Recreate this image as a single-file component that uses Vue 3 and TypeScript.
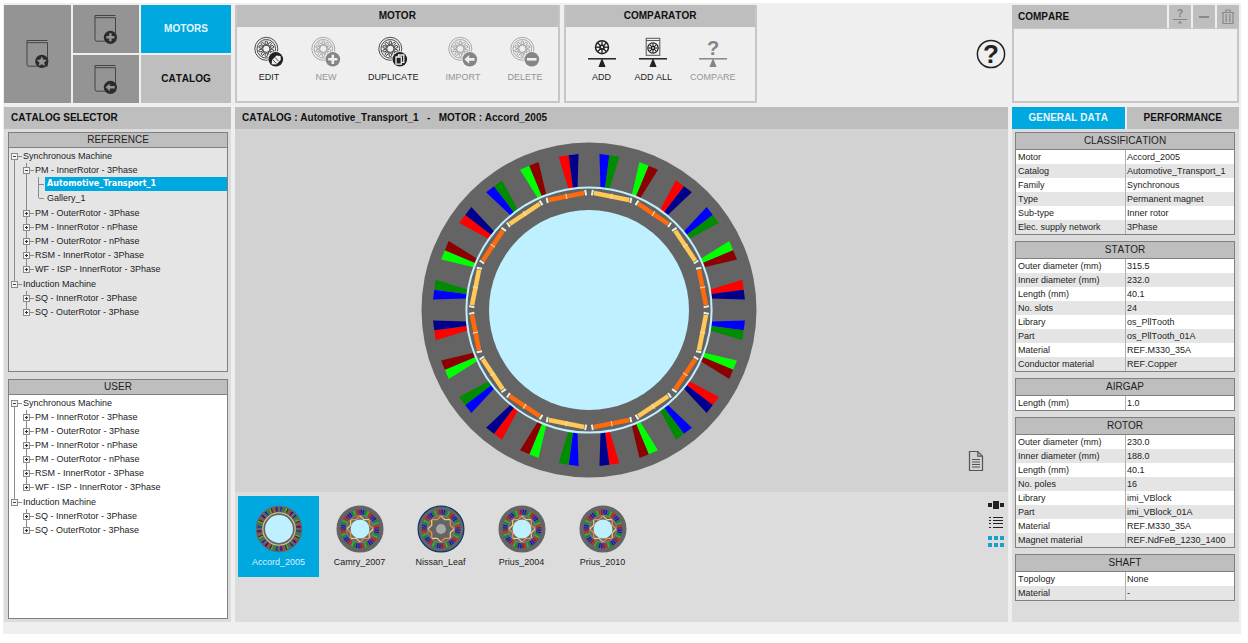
<script setup lang="ts">
import { ref } from 'vue'

type Row = [string, string]
interface Leaf { label: string; open?: boolean; children?: string[] }
interface Branch { label: string; children: Leaf[] }
interface Shape { points: string; fill: string }
interface Motor { name: string; kind: 'thin' | 'hybrid' | 'leaf' }

const pmKinds: Leaf[] = [
  { label: 'PM - OuterRotor - 3Phase' },
  { label: 'PM - InnerRotor - nPhase' },
  { label: 'PM - OuterRotor - nPhase' },
  { label: 'RSM - InnerRotor - 3Phase' },
  { label: 'WF - ISP - InnerRotor - 3Phase' },
]
const induction: Branch = {
  label: 'Induction Machine',
  children: [{ label: 'SQ - InnerRotor - 3Phase' }, { label: 'SQ - OuterRotor - 3Phase' }],
}
const catalogs: { title: string; kind: string; tree: Branch[] }[] = [
  {
    title: 'REFERENCE',
    kind: 'reference',
    tree: [
      {
        label: 'Synchronous Machine',
        children: [
          { label: 'PM - InnerRotor - 3Phase', open: true, children: ['Automotive_Transport_1', 'Gallery_1'] },
          ...pmKinds,
        ],
      },
      induction,
    ],
  },
  {
    title: 'USER',
    kind: 'user',
    tree: [
      { label: 'Synchronous Machine', children: [{ label: 'PM - InnerRotor - 3Phase' }, ...pmKinds] },
      induction,
    ],
  },
]
const catalog = ref('Automotive_Transport_1')

const sections: { title: string; rows: Row[] }[] = [
  {
    title: 'CLASSIFICATION',
    rows: [
      ['Motor', 'Accord_2005'],
      ['Catalog', 'Automotive_Transport_1'],
      ['Family', 'Synchronous'],
      ['Type', 'Permanent magnet'],
      ['Sub-type', 'Inner rotor'],
      ['Elec. supply network', '3Phase'],
    ],
  },
  {
    title: 'STATOR',
    rows: [
      ['Outer diameter (mm)', '315.5'],
      ['Inner diameter (mm)', '232.0'],
      ['Length (mm)', '40.1'],
      ['No. slots', '24'],
      ['Library', 'os_PllTooth'],
      ['Part', 'os_PllTooth_01A'],
      ['Material', 'REF.M330_35A'],
      ['Conductor material', 'REF.Copper'],
    ],
  },
  { title: 'AIRGAP', rows: [['Length (mm)', '1.0']] },
  {
    title: 'ROTOR',
    rows: [
      ['Outer diameter (mm)', '230.0'],
      ['Inner diameter (mm)', '188.0'],
      ['Length (mm)', '40.1'],
      ['No. poles', '16'],
      ['Library', 'imi_VBlock'],
      ['Part', 'imi_VBlock_01A'],
      ['Material', 'REF.M330_35A'],
      ['Magnet material', 'REF.NdFeB_1230_1400'],
    ],
  },
  { title: 'SHAFT', rows: [['Topology', 'None'], ['Material', '-']] },
]

const motorTools = [
  { label: 'EDIT', badge: 'edit', disabled: false },
  { label: 'NEW', badge: 'plus', disabled: true },
  { label: 'DUPLICATE', badge: 'copy', disabled: false },
  { label: 'IMPORT', badge: 'arrow', disabled: true },
  { label: 'DELETE', badge: 'minus', disabled: true },
]
const compareTools = [
  { label: 'ADD', icon: 'wheel', disabled: false },
  { label: 'ADD ALL', icon: 'book', disabled: false },
  { label: 'COMPARE', icon: 'question', disabled: true },
]
const teeth = Array.from({ length: 10 }, (_, i) => i * 36)
const spokes = Array.from({ length: 8 }, (_, i) => i * 45)

const motors: Motor[] = [
  { name: 'Accord_2005', kind: 'thin' },
  { name: 'Camry_2007', kind: 'hybrid' },
  { name: 'Nissan_Leaf', kind: 'leaf' },
  { name: 'Prius_2004', kind: 'hybrid' },
  { name: 'Prius_2010', kind: 'hybrid' },
]
const motor = ref('Accord_2005')

// Winding colours, clockwise, as [leading side, trailing side] of each slot.
const phases = [
  ['#0000ff', '#008c00'],
  ['#00ff00', '#8c0000'],
  ['#ff0000', '#00008c'],
]

function place(angle: number, points: number[][]): string {
  const a = (angle * Math.PI) / 180
  const c = Math.cos(a)
  const s = Math.sin(a)
  return points.map(([x, y]) => `${(x * c - y * s).toFixed(2)},${(x * s + y * c).toFixed(2)}`).join(' ')
}

const slots: Shape[] = Array.from({ length: 24 }).flatMap((_, i) => {
  const angle = 7.5 + i * 15
  return [
    { points: place(angle, [[-10, -156], [0, -156], [0, -123], [-4.6, -123]]), fill: phases[i % 3][0] },
    { points: place(angle, [[0, -156], [10, -156], [4.6, -123], [0, -123]]), fill: phases[i % 3][1] },
  ]
})
const magnets = Array.from({ length: 16 }, (_, i) => ({
  angle: 11.25 + i * 22.5,
  fill: i % 2 ? '#ff6a0d' : '#ffc857',
}))

const denseColors = ['#1414e0', '#1414b4', '#0c8c1c', '#10c828', '#e01c1c', '#a01414']
const denseSlots: Shape[] = Array.from({ length: 48 }, (_, i) => ({
  points: place(3.75 + i * 7.5, [[-6, -138], [6, -138], [4, -102], [-4, -102]]),
  fill: denseColors[i % 6],
}))
const poles = Array.from({ length: 8 }, (_, i) => ({ angle: 22.5 + i * 45, fill: i % 2 ? '#ff8a3c' : '#f0d070' }))
</script>

<template>
  <div class="page">
    <nav class="modes">
      <button class="mode tall" aria-label="Favourite catalogs">
        <svg width="24" height="30" viewBox="0 0 24 30">
          <path class="book" d="M1 1.5H21.5M1 3.7H21.5M1 1.5V25.5Q1 27.2 3 27.2H21.5V3.7" />
          <circle cx="15.8" cy="22.3" r="6.6" fill="#2b2b2b" />
          <path fill="#949494" d="M15.8 17.4l1.5 3.2 3.5.4-2.6 2.4.7 3.5-3.1-1.7-3.1 1.7.7-3.5-2.6-2.4 3.5-.4z" />
        </svg>
      </button>
      <button class="mode" aria-label="New catalog">
        <svg width="24" height="30" viewBox="0 0 24 30">
          <path class="book" d="M1 1.5H21.5M1 3.7H21.5M1 1.5V25.5Q1 27.2 3 27.2H21.5V3.7" />
          <circle cx="16.4" cy="23.3" r="6.6" fill="#2b2b2b" />
          <path d="M16.4 19.3v8M12.4 23.3h8" stroke="#949494" stroke-width="2.4" />
        </svg>
      </button>
      <button class="tab active">MOTORS</button>
      <button class="mode" aria-label="Import catalog">
        <svg width="24" height="30" viewBox="0 0 24 30">
          <path class="book" d="M1 1.5H21.5M1 3.7H21.5M1 1.5V25.5Q1 27.2 3 27.2H21.5V3.7" />
          <circle cx="16.4" cy="23.3" r="6.6" fill="#2b2b2b" />
          <path fill="#949494" d="M11.6 23.3l4.2-3.9v2.6h5v2.6h-5v2.6z" />
        </svg>
      </button>
      <button class="tab">CATALOG</button>
    </nav>

    <header class="toolbar">
      <section class="group">
        <h2>MOTOR</h2>
        <div class="tools">
          <button v-for="t in motorTools" :key="t.label" class="tool" :disabled="t.disabled">
            <svg width="30" height="32" viewBox="0 0 30 32">
              <g fill="none" stroke="currentColor" stroke-width="0.8">
                <circle cx="12.3" cy="12.8" r="11.5" />
                <circle cx="12.3" cy="12.8" r="9.3" />
                <circle cx="12.3" cy="12.8" r="3.6" />
                <rect v-for="a in teeth" :key="a" x="11.2" y="5.2" width="2.2" height="3.4" rx="0.6" :transform="`rotate(${a} 12.3 12.8)`" />
              </g>
              <circle cx="21.8" cy="23.3" r="8.1" fill="#efefef" />
              <circle cx="21.8" cy="23.3" r="7.3" :fill="t.disabled ? '#858585' : '#222'" />
              <g v-if="t.badge === 'edit'">
                <path d="M18 24l4.5-4.6 4 .6.4 3.8-4.6 4.6-4.6-.2z" fill="#efefef" />
                <path d="M18.6 23.6l3.7 3.9M21 21.4l3.4 3.6" stroke="#222" stroke-width="0.8" />
              </g>
              <path v-else-if="t.badge === 'plus'" d="M21.8 18.7v9.2M17.2 23.3h9.2" stroke="#efefef" stroke-width="2.6" />
              <g v-else-if="t.badge === 'copy'" stroke="#efefef" stroke-width="1.3">
                <path d="M20.5 19h5.3v7.4h-5.3z" fill="#222" />
                <path d="M18 21h5.3v7.2h-5.3z" fill="#222" />
              </g>
              <path v-else-if="t.badge === 'arrow'" d="M16.4 23.3l4.8-4.4v3h5.4v2.8h-5.4v3z" fill="#efefef" />
              <path v-else d="M17 23.3h9.6" stroke="#efefef" stroke-width="2.6" />
            </svg>
            <span>{{ t.label }}</span>
          </button>
        </div>
      </section>

      <section class="group compare-group">
        <h2>COMPARATOR</h2>
        <div class="tools">
          <button v-for="t in compareTools" :key="t.label" class="tool" :disabled="t.disabled">
            <svg width="30" height="32" viewBox="0 0 30 32">
              <rect v-if="t.icon === 'book'" x="8.2" y="2.3" width="13.6" height="17" fill="none" stroke="#555" stroke-width="1" />
              <path v-if="t.icon === 'book'" d="M8 4.5h14" stroke="#555" />
              <g v-if="t.icon !== 'question'" :transform="t.icon === 'book' ? 'translate(15 12) scale(0.8)' : 'translate(15 11.2)'">
                <circle r="6.5" fill="none" stroke="#222" stroke-width="1.5" />
                <path v-for="a in spokes" :key="a" d="M0 -6V0" stroke="#222" stroke-width="1.3" :transform="`rotate(${a})`" />
                <circle r="2.8" fill="#222" />
                <circle r="1.1" fill="#efefef" />
              </g>
              <text v-else x="15" y="19" class="mark" font-size="20">?</text>
              <path d="M1 22.8h28" :stroke="t.disabled ? '#858585' : '#222'" stroke-width="1.5" />
              <path d="M15 22l3.6 9h-7.2z" :fill="t.disabled ? '#858585' : '#222'" />
            </svg>
            <span>{{ t.label }}</span>
          </button>
        </div>
      </section>

      <button class="help" aria-label="Help">
        <svg width="30" height="30" viewBox="0 0 30 30">
          <circle cx="15" cy="15" r="13.6" fill="none" stroke="#222" stroke-width="1.5" />
          <text x="15" y="24" class="mark" font-size="26">?</text>
        </svg>
      </button>
    </header>

    <section class="compare">
      <div class="compare-head">
        <h2>COMPARE</h2>
        <button aria-label="Compare motors">
          <svg width="16" height="18" viewBox="0 0 16 18">
            <text x="8" y="9" class="mark" font-size="10">?</text>
            <path d="M1 11.5h14" stroke="#888" />
            <path d="M8 12.4l2 3.2h-4z" fill="#888" />
          </svg>
        </button>
        <button aria-label="Remove motor">
          <svg width="14" height="18" viewBox="0 0 14 18"><path d="M2 9h10" stroke="#888" stroke-width="2" /></svg>
        </button>
        <button aria-label="Clear comparison">
          <svg width="14" height="18" viewBox="0 0 14 18">
            <path d="M2 4.5h10v11h-10zM1 4.5h12M5 4V2h4v2M5.2 6v8M8.8 6v8" fill="none" stroke="#888" stroke-width="1.2" />
          </svg>
        </button>
      </div>
      <div class="compare-body"></div>
    </section>

    <aside class="selector">
      <h1 class="bar">CATALOG SELECTOR</h1>
      <div class="boxes">
        <section v-for="box in catalogs" :key="box.title" class="box" :class="box.kind">
          <h3>{{ box.title }}</h3>
          <ul class="tree">
            <li v-for="branch in box.tree" :key="branch.label">
              <div class="node">
                <button class="toggle" :aria-label="`Collapse ${branch.label}`"></button>
                <span>{{ branch.label }}</span>
              </div>
              <ul>
                <li v-for="leaf in branch.children" :key="leaf.label">
                  <div class="node">
                    <button class="toggle" :class="{ closed: !leaf.open }" :aria-label="`Toggle ${leaf.label}`"></button>
                    <span>{{ leaf.label }}</span>
                  </div>
                  <ul v-if="leaf.open" class="files">
                    <li v-for="name in leaf.children" :key="name">
                      <button class="file" :class="{ selected: catalog === name }" @click="catalog = name">{{ name }}</button>
                    </li>
                  </ul>
                </li>
              </ul>
            </li>
          </ul>
        </section>
      </div>
    </aside>

    <main class="viewer">
      <h1 class="bar">CATALOG : Automotive_Transport_1 &nbsp;&nbsp;-&nbsp;&nbsp; MOTOR : Accord_2005</h1>
      <div class="stage">
        <svg class="section-view" viewBox="-168 -168 336 336" role="img" aria-label="Motor cross-section">
          <circle r="167.5" fill="#646464" />
          <polygon v-for="(s, i) in slots" :key="i" :points="s.points" :fill="s.fill" />
          <circle r="122.6" fill="#646464" stroke="#c0f0ff" stroke-width="2" />
          <g v-for="m in magnets" :key="m.angle" :transform="`rotate(${m.angle})`">
            <rect x="-18" y="-118" width="36" height="4.6" :fill="m.fill" />
            <path d="M-19.6 -118.4v5.4M19.6 -118.4v5.4" stroke="#e8f4e4" stroke-width="2" />
            <path d="M0 -118.6v5.4" stroke="#e8e4c8" stroke-width="1" />
          </g>
          <circle r="100" fill="#bff0ff" />
        </svg>
        <div class="notes">
          <button aria-label="Motor notes">
            <svg width="16" height="22" viewBox="0 0 16 22">
              <path d="M1.5 1.5h8.3l4.7 4.7v14.3h-13zM9.8 1.5v4.7h4.7" fill="none" stroke="#555" stroke-width="1.2" />
              <path d="M4 9.5h8M4 12h8M4 14.5h8M4 17h8" stroke="#555" />
            </svg>
          </button>
        </div>
      </div>
      <div class="strip">
        <div class="thumbs">
          <button v-for="m in motors" :key="m.name" class="thumb" :class="{ selected: motor === m.name }" @click="motor = m.name">
            <svg width="48" height="48" viewBox="-172 -172 344 344">
              <template v-if="m.kind === 'thin'">
                <circle r="167" fill="#646464" />
                <polygon v-for="(s, i) in slots" :key="i" :points="s.points" :fill="s.fill" />
                <circle r="116" fill="#646464" stroke="#d8c890" stroke-width="8" />
                <circle r="100" fill="#bff0ff" />
              </template>
              <template v-else>
                <circle r="164" fill="#646464" :stroke="m.kind === 'leaf' ? '#10386c' : '#646464'" stroke-width="9" />
                <polygon v-for="(s, i) in denseSlots" :key="i" :points="s.points" :fill="s.fill" />
                <circle r="98" fill="#646464" stroke="#8fa09a" stroke-width="4" />
                <g v-for="p in poles" :key="p.angle" :transform="`rotate(${p.angle})`">
                  <path d="M-34 -86L0 -72L34 -86" fill="none" :stroke="p.fill" stroke-width="9" />
                </g>
                <circle v-if="m.kind === 'leaf'" r="36" fill="#a8a8a8" />
                <circle v-else r="68" fill="#bff0ff" />
              </template>
            </svg>
            <span>{{ m.name }}</span>
          </button>
        </div>
        <div class="views">
          <button aria-label="Carousel view">
            <svg width="18" height="10" viewBox="0 0 18 10"><path d="M1 3h4v4h-4zM6 1h6v8h-6zM13 3h4v4h-4z" fill="#222" /></svg>
          </button>
          <button aria-label="List view">
            <svg width="18" height="13" viewBox="0 0 18 13"><path d="M2 1.5h2M6 1.5h10M2 4.5h2M6 4.5h10M2 7.5h2M6 7.5h10M2 11.5h2M6 11.5h10" stroke="#222" /></svg>
          </button>
          <button aria-label="Grid view">
            <svg width="18" height="13" viewBox="0 0 18 13"><path d="M1 1h4v4h-4zM7 1h4v4h-4zM13 1h4v4h-4zM1 8h4v4h-4zM7 8h4v4h-4zM13 8h4v4h-4z" fill="#1a9fd0" /></svg>
          </button>
        </div>
      </div>
    </main>

    <aside class="details">
      <div class="tabs">
        <button class="tab active">GENERAL DATA</button>
        <button class="tab">PERFORMANCE</button>
      </div>
      <div class="sheets">
        <table v-for="s in sections" :key="s.title">
          <thead>
            <tr><th colspan="2">{{ s.title }}</th></tr>
          </thead>
          <tbody>
            <tr v-for="r in s.rows" :key="r[0]">
              <th scope="row">{{ r[0] }}</th>
              <td>{{ r[1] }}</td>
            </tr>
          </tbody>
        </table>
      </div>
    </aside>
  </div>
</template>

<style>
body {
  margin: 0;
  background: #fff;
}
</style>

<style scoped>
.page {
  box-sizing: border-box;
  height: calc(100vh - 12px);
  min-height: 620px;
  margin: 3px 7px 9px 3px;
  padding: 2px 2px 12px 1px;
  display: grid;
  grid-template-columns: 227px minmax(0, 1fr) 227px;
  grid-template-rows: 98px minmax(0, 1fr);
  gap: 4px;
  background: #efefef;
  font: 9px/14px "Liberation Sans", Arial, sans-serif;
  font-kerning: none;
  color: #222;
}
button {
  margin: 0;
  padding: 0;
  border: 0;
  background: none;
  font: inherit;
  color: inherit;
  cursor: pointer;
}
svg {
  display: block;
}
h1, h2, h3, ul {
  margin: 0;
  padding: 0;
}
h1, h2, .tab {
  font-size: 10px;
  font-weight: bold;
  color: #111;
}
ul {
  list-style: none;
}
.modes {
  display: grid;
  grid-template-columns: 67px 66px 1fr;
  grid-template-rows: 1fr 1fr;
  gap: 2px;
}
.mode {
  display: grid;
  place-items: center;
  background: #949494;
}
.tall {
  grid-row: span 2;
}
.book {
  fill: none;
  stroke: #444;
  stroke-width: 1;
}
.tab {
  background: #bebebe;
}
.tab.active {
  background: #00a8e0;
  color: #e4f6fc;
}
.toolbar {
  display: flex;
  gap: 4px;
}
.group {
  box-sizing: border-box;
  border: 2px solid #c6c6c6;
  border-top: 0;
}
.group h2 {
  background: #bebebe;
  line-height: 22px;
  text-align: center;
}
.tools {
  display: flex;
  gap: 27px;
  padding: 9px 15px 0 17px;
}
.compare-group .tools {
  gap: 18px;
  padding: 9px 19px 0 21px;
}
.tool {
  min-width: 30px;
  display: flex;
  flex-direction: column;
  align-items: center;
  gap: 2px;
}
.tool span {
  line-height: 14px;
}
.tool:disabled {
  color: #959595;
  cursor: default;
}
.mark {
  fill: #222;
  font-family: "Liberation Sans", Arial, sans-serif;
  font-weight: bold;
  text-anchor: middle;
}
.tool:disabled .mark, .compare .mark {
  fill: #858585;
}
.help {
  align-self: center;
  margin-left: auto;
  margin-right: 2px;
}
.compare {
  display: flex;
  flex-direction: column;
}
.compare-head {
  display: flex;
  gap: 2px;
  height: 23px;
}
.compare-head h2 {
  flex: 1;
  padding-left: 6px;
  background: #bebebe;
  line-height: 23px;
}
.compare-head button {
  width: 22px;
  display: grid;
  place-items: center;
  background: #bebebe;
}
.compare-body {
  flex: 1;
  border: 2px solid #c6c6c6;
  border-top-width: 1px;
}
.bar {
  height: 22px;
  padding-left: 7px;
  background: #bebebe;
  line-height: 22px;
  white-space: nowrap;
  overflow: hidden;
}
.selector, .viewer, .details {
  min-height: 0;
  display: flex;
  flex-direction: column;
  background: #dcdcdc;
}
.boxes {
  flex: 1;
  display: flex;
  flex-direction: column;
  gap: 7px;
  padding: 3px 3px 3px 4px;
}
.box {
  flex: 1;
  border: 1px solid #808080;
  background: #e5e5e5;
}
.box.user {
  background: #fff;
}
.box h3 {
  border-bottom: 1px solid #808080;
  background: #bebebe;
  font-size: 10px;
  font-weight: normal;
  line-height: 14px;
  text-align: center;
}
.tree {
  padding: 1px 0 0 2px;
}
.tree ul {
  padding: 0 0 1px 12px;
}
.tree li {
  position: relative;
}
.node {
  display: flex;
  align-items: center;
  height: 14px;
  white-space: nowrap;
}
.toggle {
  position: relative;
  box-sizing: border-box;
  width: 7px;
  height: 7px;
  margin-right: 5px;
  border: 1px solid #8a8a8a;
  background: linear-gradient(#444, #444) center / 3px 1px no-repeat, #f4f4f4;
  z-index: 1;
}
.toggle.closed {
  background: linear-gradient(#333, #333) center / 3px 1px no-repeat, linear-gradient(#333, #333) center / 1px 3px no-repeat, #f4f4f4;
}
.toggle::after {
  content: "";
  position: absolute;
  left: 6px;
  top: 2px;
  width: 4px;
  height: 1px;
  background: #8a8a8a;
}
.tree li::before {
  content: "";
  position: absolute;
  left: 3px;
  top: 0;
  bottom: 0;
  width: 1px;
  background: #8a8a8a;
}
.tree > li:first-child::before {
  top: 7px;
}
.tree li:last-child::before {
  bottom: auto;
  height: 7px;
}
.files li::after {
  content: "";
  position: absolute;
  left: 4px;
  top: 7px;
  width: 5px;
  height: 1px;
  background: #8a8a8a;
}
.file {
  display: block;
  box-sizing: border-box;
  width: calc(100% - 10px);
  height: 14px;
  margin-left: 10px;
  padding-left: 2px;
  text-align: left;
}
.file.selected {
  background: #00a8e0;
  color: #fff;
  font: bold 8px/14px "DejaVu Sans", sans-serif;
}
.stage {
  flex: 1;
  min-height: 0;
  display: grid;
  grid-template-columns: minmax(0, 1fr) 65px;
  grid-template-rows: minmax(0, 1fr);
  background: #d2d2d2;
}
.section-view {
  width: 100%;
  height: calc(100% - 27px);
  margin-top: 13px;
}
.notes {
  display: flex;
  justify-content: center;
  align-items: flex-end;
  padding-bottom: 20px;
}
.strip {
  display: flex;
  justify-content: space-between;
  min-height: 122px;
  padding: 4px 3px;
}
.thumbs {
  display: flex;
  align-items: flex-start;
}
.thumb {
  width: 81px;
  height: 81px;
  display: flex;
  flex-direction: column;
  align-items: center;
  justify-content: center;
  gap: 2px;
}
.thumb.selected {
  background: #00a8e0;
  color: #d8f2fb;
}
.views {
  display: flex;
  flex-direction: column;
  align-items: center;
  gap: 6px;
  padding-top: 4px;
}
.tabs {
  display: grid;
  grid-template-columns: 1fr 1fr;
  gap: 2px;
  height: 22px;
  background: #efefef;
}
.sheets {
  display: flex;
  flex-direction: column;
  gap: 6px;
  padding: 3px 4px 3px 3px;
}
table {
  width: 100%;
  table-layout: fixed;
  border: 1px solid #808080;
  border-spacing: 0;
}
th, td {
  height: 14px;
  padding: 0 0 0 2px;
  font-weight: normal;
  text-align: left;
  white-space: nowrap;
}
td {
  padding-left: 1px;
  border-left: 1px solid #b0b0b0;
}
thead th {
  padding: 0;
  border-bottom: 1px solid #808080;
  background: #bebebe;
  font-size: 10px;
  line-height: 16px;
  text-align: center;
}
tbody tr {
  background: #fff;
}
tbody tr:nth-child(even) {
  background: #e5e5e5;
}
</style>
